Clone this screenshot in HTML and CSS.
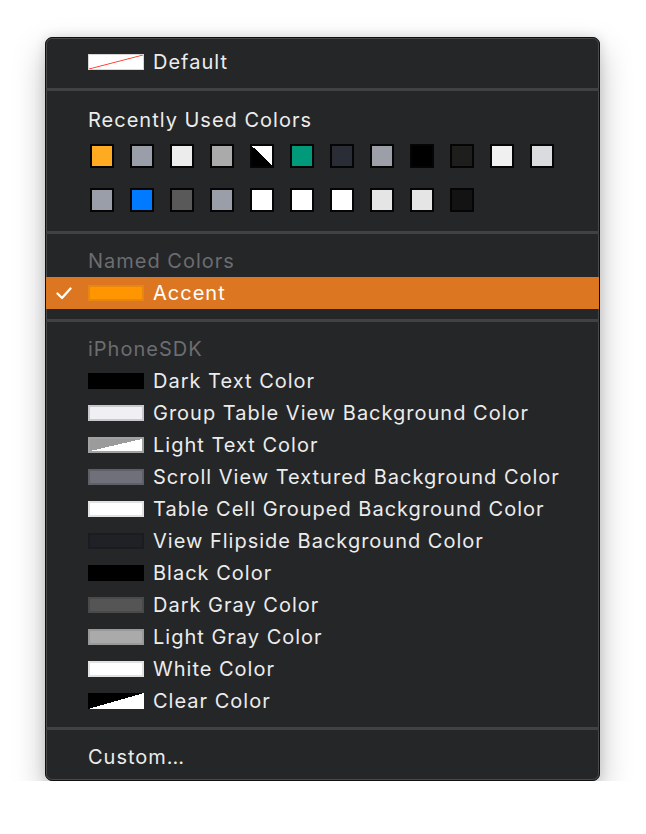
FILE: index.html
```html
<!DOCTYPE html>
<html>
<head>
<meta charset="utf-8">
<link rel="stylesheet" href="styles.css">
</head>
<body>
<div class="menu">
  <div class="row"><span class="mark"></span><span class="sw sw-default"></span><span class="label">Default</span></div>
  <div class="sep"></div>
  <div class="row head head-recent"><span class="mark"></span><span class="label">Recently Used Colors</span></div>
  <div class="grid">
    <span class="sq" style="--c:#ffab22"></span>
    <span class="sq" style="--c:#9a9ea8"></span>
    <span class="sq" style="--c:#ececec"></span>
    <span class="sq" style="--c:#aaaaaa"></span>
    <span class="sq sq-bw"></span>
    <span class="sq" style="--c:#00997a"></span>
    <span class="sq" style="--c:#2a2d35"></span>
    <span class="sq" style="--c:#9d9fa8"></span>
    <span class="sq" style="--c:#000000"></span>
    <span class="sq" style="--c:#1e1e1c"></span>
    <span class="sq" style="--c:#f0f0f0"></span>
    <span class="sq" style="--c:#dadbdf"></span>
    <span class="sq" style="--c:#9a9ea8"></span>
    <span class="sq" style="--c:#007aff"></span>
    <span class="sq" style="--c:#595959"></span>
    <span class="sq" style="--c:#9a9ea8"></span>
    <span class="sq" style="--c:#ffffff"></span>
    <span class="sq" style="--c:#ffffff"></span>
    <span class="sq" style="--c:#ffffff"></span>
    <span class="sq" style="--c:#e5e5e5"></span>
    <span class="sq" style="--c:#e5e5e5"></span>
    <span class="sq" style="--c:#131313"></span>
  </div>
  <div class="sep"></div>
  <div class="row head"><span class="mark"></span><span class="label dim">Named Colors</span></div>
  <div class="row selected">
    <span class="mark"><svg width="16" height="13" viewBox="0 0 16 13"><path d="M1.5 6.5 L6 11 L14.5 1.5" fill="none" stroke="#fff" stroke-width="2.3" stroke-linecap="round" stroke-linejoin="round"/></svg></span>
    <span class="sw" style="--c:#ff9500;--b:#e8870f"></span><span class="label">Accent</span>
  </div>
  <div class="sep"></div>
  <div class="row head"><span class="mark"></span><span class="label dim">iPhoneSDK</span></div>
  <div class="row"><span class="mark"></span><span class="sw" style="--c:#000;--b:#000"></span><span class="label">Dark Text Color</span></div>
  <div class="row"><span class="mark"></span><span class="sw" style="--c:#efeff4;--b:#c8c8cd"></span><span class="label">Group Table View Background Color</span></div>
  <div class="row"><span class="mark"></span><span class="sw sw-light"></span><span class="label">Light Text Color</span></div>
  <div class="row"><span class="mark"></span><span class="sw" style="--c:#6f707a;--b:#5e5f67"></span><span class="label">Scroll View Textured Background Color</span></div>
  <div class="row"><span class="mark"></span><span class="sw" style="--c:#ffffff;--b:#e2e2e2"></span><span class="label">Table Cell Grouped Background Color</span></div>
  <div class="row"><span class="mark"></span><span class="sw" style="--c:#1f2127;--b:#1b1c20"></span><span class="label">View Flipside Background Color</span></div>
  <div class="row"><span class="mark"></span><span class="sw" style="--c:#000;--b:#000"></span><span class="label">Black Color</span></div>
  <div class="row"><span class="mark"></span><span class="sw" style="--c:#555555;--b:#4a4a4a"></span><span class="label">Dark Gray Color</span></div>
  <div class="row"><span class="mark"></span><span class="sw" style="--c:#aaaaaa;--b:#999999"></span><span class="label">Light Gray Color</span></div>
  <div class="row"><span class="mark"></span><span class="sw" style="--c:#ffffff;--b:#e2e2e2"></span><span class="label">White Color</span></div>
  <div class="row"><span class="mark"></span><span class="sw sw-clear"></span><span class="label">Clear Color</span></div>
  <div class="sep"></div>
  <div class="row"><span class="mark"></span><span class="label">Custom…</span></div>
</div>
</body>
</html>
```
FILE: styles.css
```css
html, body {
  margin: 0;
  padding: 0;
  background: #ffffff;
}
body {
  padding: 37px 0 0 45px;
  font-family: Inter, "Noto Sans", sans-serif;
}
.menu {
  width: 555px;
  box-sizing: border-box;
  background: #252628;
  border: 1px solid #101011;
  border-radius: 7px;
  box-shadow: inset 0 0 0 1px #48494b, 0 14px 32px rgba(0, 0, 0, 0.26), 0 0 12px rgba(0, 0, 0, 0.12);
  padding: 8px 0 7px;
  display: flex;
  flex-direction: column;
}
.row {
  height: 32px;
  display: flex;
  align-items: center;
  color: #ececec;
  font-size: 20px;
  letter-spacing: 1px;
}
.mark {
  width: 42px;
  flex: none;
  display: flex;
  align-items: center;
  padding-left: 10px;
  box-sizing: border-box;
}
.mark svg { display: block; }
.sw {
  width: 56px;
  height: 16px;
  flex: none;
  box-sizing: border-box;
  background: var(--c);
  border: 2px solid var(--b);
  margin-right: 9px;
}
.sw-default {
  background: linear-gradient(to bottom right, #ffffff calc(50% - 0.9px), #ff3b30 50%, #ffffff calc(50% + 0.9px));
  border: 1.5px solid #d6d6d6;
}
.sw-light {
  background: linear-gradient(to bottom right, #9b9b9b 50%, #ffffff 50%);
  border: 2px solid #a2a2a2;
}
.sw-clear {
  background: linear-gradient(to bottom right, #000000 50%, #ffffff 50%);
  border: none;
}
.label { white-space: nowrap; }
.dim { color: #6c6d70; }
.head-recent { margin-top: 2px; }
.selected {
  background: #dd7621;
  color: #ffffff;
}
.sep {
  height: 3px;
  background: #414244;
  margin: 10px 0 11px;
  flex: none;
}
.grid {
  display: grid;
  grid-template-columns: repeat(12, 24px);
  column-gap: 16px;
  row-gap: 20px;
  padding: 8px 0 9px 44px;
}
.sq {
  width: 24px;
  height: 24px;
  box-sizing: border-box;
  border: 2px solid #050505;
  background: var(--c);
}
.sq-bw {
  background: linear-gradient(to top right, #000000 50%, #ffffff 50%);
}
```
